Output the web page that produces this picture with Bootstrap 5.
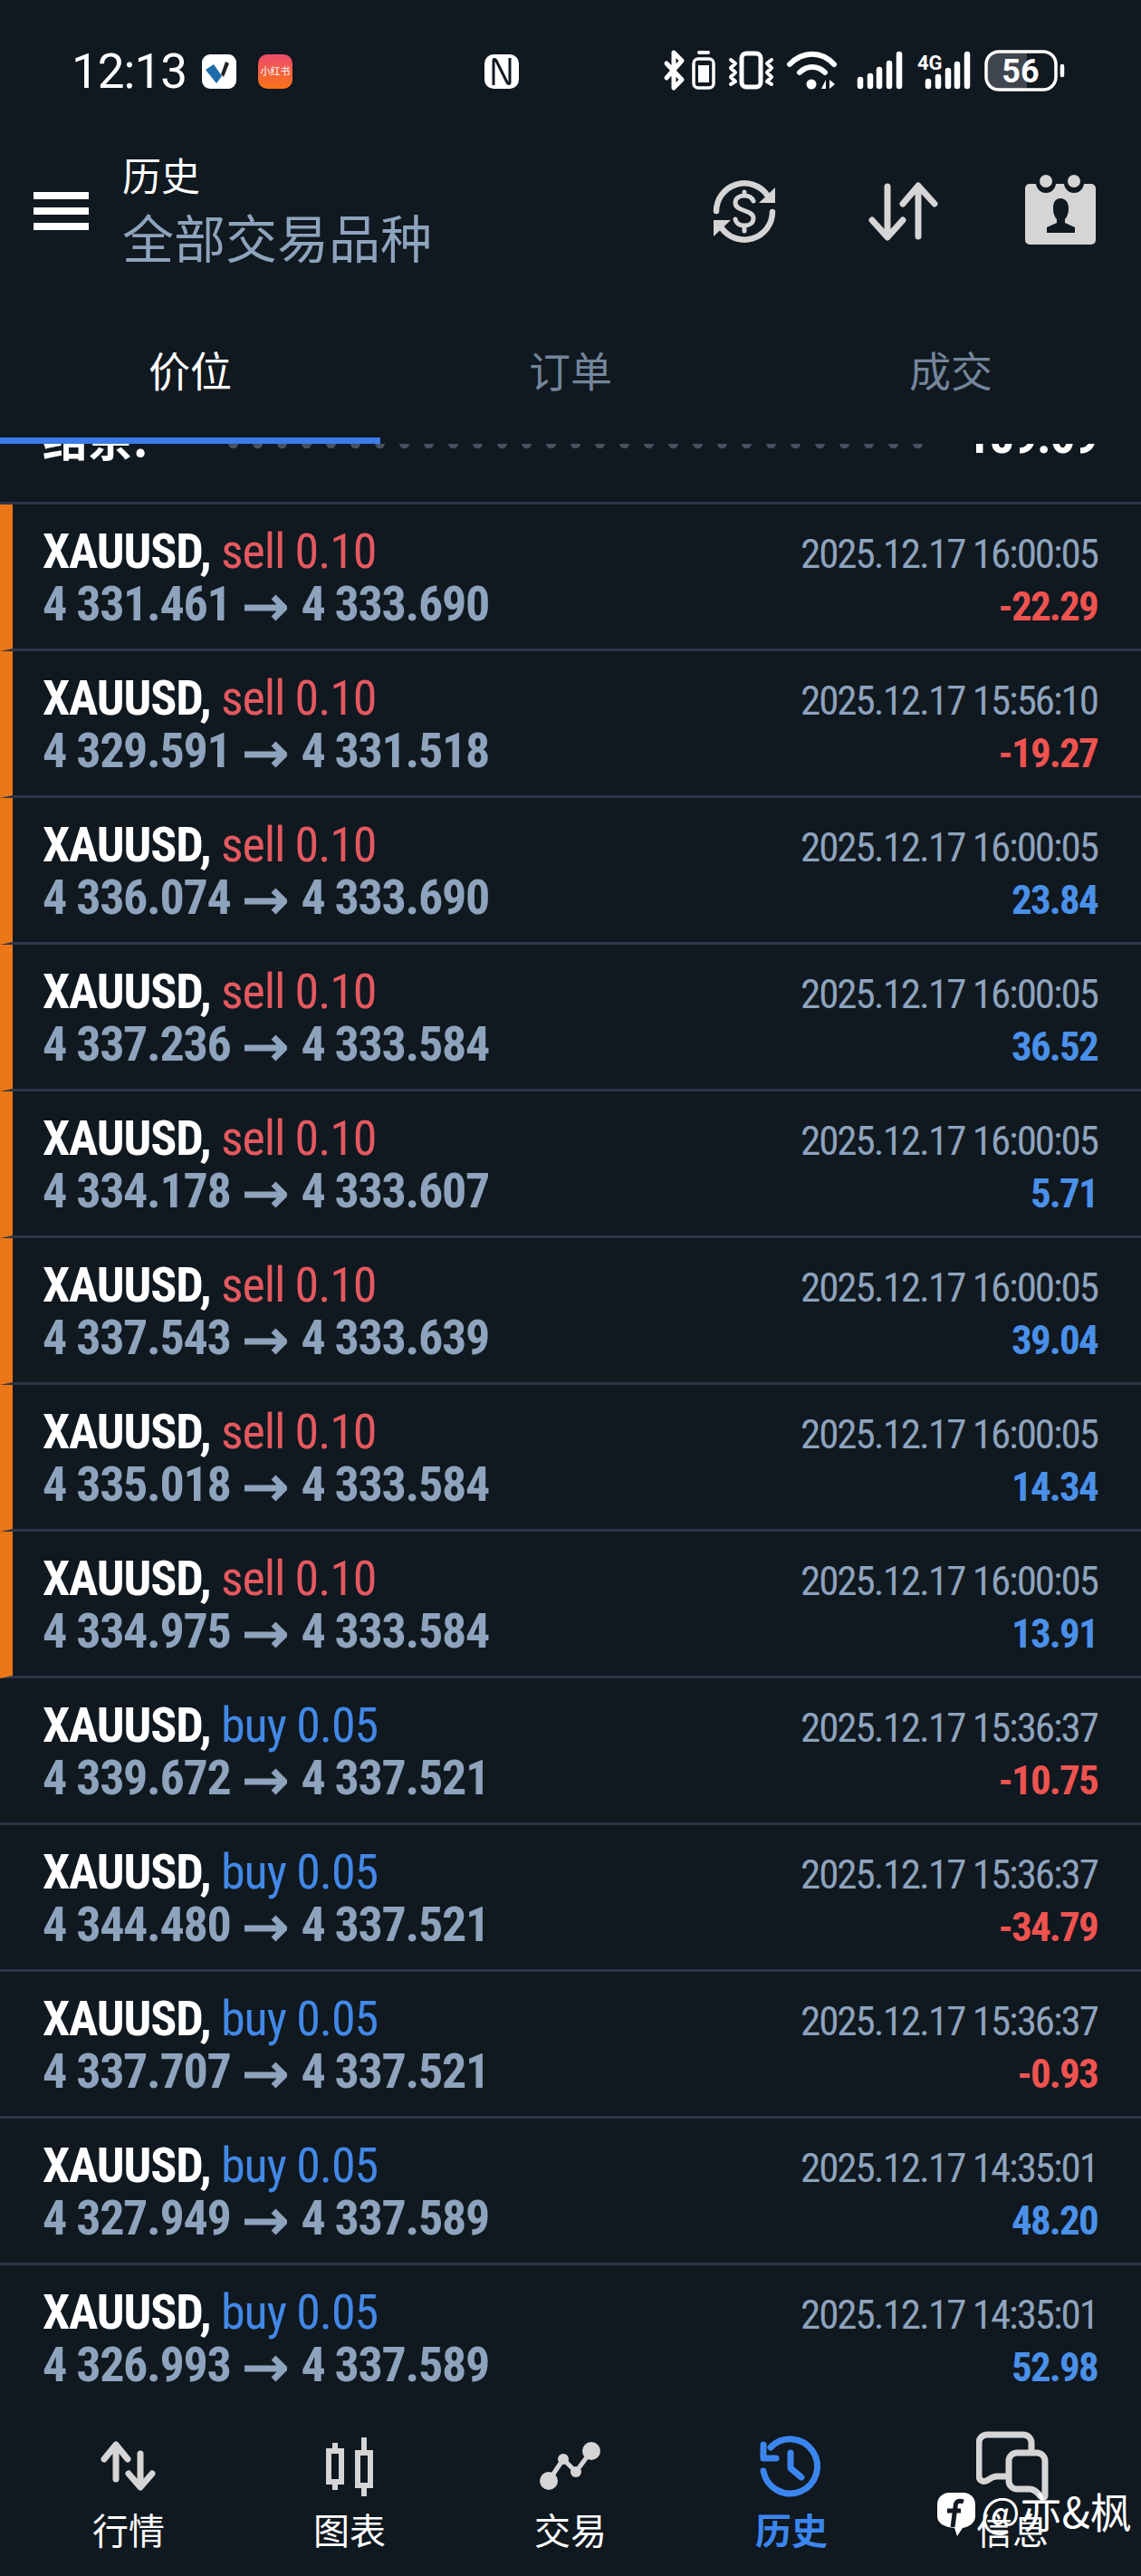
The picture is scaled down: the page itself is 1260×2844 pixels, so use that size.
<!DOCTYPE html>
<html lang="zh">
<head>
<meta charset="utf-8">
<title>历史</title>
<link href="https://cdn.jsdelivr.net/npm/bootstrap@5.3.0/dist/css/bootstrap.min.css" rel="stylesheet">
<style>
html,body{background:#101820;margin:0}
body{width:1260px;height:2844px;overflow:hidden;position:relative;color:#fff;font-family:"Noto Sans CJK SC","Noto Sans",sans-serif}
.status-strip{height:158px;padding:0 83px 0 79px}
.clock{font-family:Roboto,sans-serif;font-size:53px;line-height:1;letter-spacing:-1px;width:144px}
.nfc-mark{margin-left:212px}
.app-bar{height:150px;padding:0 50px 0 37px}
.burger{width:61px;gap:9px;margin-right:37px;flex:none}
.burger i{display:block;height:8px;background:#fff}
.title-stack{padding-bottom:10px}
.title-top{font-size:43px;line-height:64px}
.title-sub{font-size:57px;line-height:72px;color:#8ea3bc}
.tab-row{height:182px}
.tab-cell{font-size:46px;line-height:66px;padding-top:66px;color:#74859a}
.tab-cell.on{color:#fff;border-bottom:7px solid #3b7bea;height:182px}
.sum-strip{height:67px;overflow:hidden;border-bottom:3px solid #2e3547;padding:0 48px 0 47px}
.sum-line{margin-top:-37px;height:58px;line-height:58px;font-weight:700;font-size:54px;white-space:nowrap}
.sum-cn{flex:none;width:110px;font-size:50px}
.sum-dots{flex:none;height:10px;width:783px;margin:32px 0 0 87px;background:radial-gradient(circle,#484f5e 5px,transparent 5.6px) 0 0/27px 10px repeat-x}
.num,.sum-val,.stamp,.pl{font-family:Roboto,"Liberation Sans",sans-serif;font-stretch:75%}
.sum-val{margin-left:auto;letter-spacing:-1.1px}
.trade-list>.trade-row{background:#101820;color:#fff;border-style:solid;border-color:#2e3547;border-width:0 0 3px;height:162px;padding:23px 48px 0 47px}
.trade-list>.trade-row:last-child{border-bottom-width:0;height:159px}
.trade-list>.trade-row.is-sell{border-left:14px solid #ec7718;padding-left:33px}
.deal-line{height:58px;line-height:58px}
.num{font-size:54px;font-weight:700;white-space:nowrap;letter-spacing:-1.1px}
.num svg{width:47px;height:30px;margin:0 15px 0 16px;vertical-align:-1px}
.side{font-weight:400}
.num.price{color:#8ea3bc;letter-spacing:-1.3px}
.c-sell{color:#e4595f}
.c-buy{color:#4288e6}
.stamp{font-size:45px;color:#8ea3bc;font-weight:400;letter-spacing:-2px}
.pl{font-size:45px;font-weight:700;letter-spacing:-1.8px}
.pl.up{color:#4a90e8}
.pl.down{color:#ef5350}
.foot-nav{height:184px;padding:22px 20px 0}
.foot-item{width:244px;font-size:40px;line-height:46px}
.foot-item svg{width:80px;height:80px;display:block;margin-bottom:7px}
.foot-item.on{color:#3b86ee;font-weight:700}
.ink{fill:none;stroke:#d5d5d5;stroke-linecap:round;stroke-linejoin:round}
.solid{fill:#d5d5d5}
.wm{position:absolute;left:1035px;top:2743px;font-size:46px;line-height:56px;gap:6px;color:#fff}
.wm svg{width:42px;height:48px;margin-top:9px}
</style>
</head>
<body>
<div class="status-strip d-flex align-items-center">
  <span class="clock">12:13</span>
  <svg width="38" height="38" viewBox="0 0 38 38" class="me-4"><rect width="38" height="38" rx="9" fill="#fff"/><path d="M4 17l9-6 9 13-6 8z" fill="#1c6ca8"/><path d="M26 8l4 2-6 15-3-3z" fill="#222"/></svg>
  <svg width="38" height="38" viewBox="0 0 38 38"><defs><linearGradient id="xhs" x1="0" y1="0" x2="0" y2="1"><stop offset="0" stop-color="#ef4c6e"/><stop offset="1" stop-color="#f97316"/></linearGradient></defs><rect width="38" height="38" rx="10" fill="url(#xhs)"/><text x="19" y="23" text-anchor="middle" font-size="11" fill="#fff" font-family="Noto Sans CJK SC">小红书</text></svg>
  <svg class="nfc-mark" width="38" height="38" viewBox="0 0 38 38"><rect width="38" height="38" rx="10" fill="#fff"/><path d="M10 34V7c0-2 2-2 3 0l12 24c1 2 3 2 3 0V4" fill="none" stroke="#101820" stroke-width="3"/></svg>
  <svg class="ms-auto" width="445" height="58" viewBox="733 50 445 58" fill="none" stroke="#fff" stroke-linecap="round" stroke-linejoin="round">
    <path d="M737 70l17 18-9 9V58l9 9-17 19" stroke-width="5"/>
    <rect x="767" y="65" width="22" height="32" rx="5" stroke-width="3.5"/><path d="M773 58h10" stroke-width="4"/><rect x="772" y="72" width="12" height="19" fill="#fff" stroke="none"/>
    <rect x="820" y="59" width="21" height="37" rx="5" stroke-width="5"/>
    <path d="M808 66l5 4-5 5 5 5-5 5 5 5-5 3M853 66l-5 4 5 5-5 5 5 5-5 5 5 3" stroke-width="4"/>
    <path d="M873 71c15-15 35-15 49 0M884 80c8-8 20-8 28 0" stroke-width="6"/><circle cx="897" cy="93" r="5.5" fill="#fff" stroke="none"/>
    <path d="M913 88l-5 10h5zM917 88l6 5-6 5z" fill="#fff" stroke="none"/>
    <path d="M951 88v7M962 84v11M972 77v18M983 70v25M994 60v35" stroke-width="6.5"/>
    <path d="M1026 90v5M1037 85v10M1048 78v17M1058 71v24M1069 60v35" stroke-width="6.5"/>
    <text x="1014" y="77" font-family="Roboto" font-weight="700" font-size="22" fill="#fff" stroke="none">4G</text>
    <path d="M1091 71a13 13 0 0 1 13-13h31v40h-31a13 13 0 0 1-13-13z" fill="#40464f" stroke="none"/>
    <rect x="1090" y="57" width="77" height="42" rx="14" stroke-width="3.5"/>
    <text x="1128" y="91" text-anchor="middle" font-family="Roboto" font-weight="700" font-size="36" fill="#fff" stroke="none">56</text>
    <path d="M1174 73v10" stroke-width="4.5"/>
  </svg>
</div>

<div class="app-bar d-flex align-items-center">
  <div class="burger d-flex flex-column"><i></i><i></i><i></i></div>
  <div class="flex-grow-1 title-stack">
    <div class="title-top">历史</div>
    <div class="title-sub">全部交易品种</div>
  </div>
  <svg width="430" height="90" viewBox="780 188 430 90">
    <path class="ink" stroke-width="6.5" d="M791 233a31 31 0 0 1 56-18M853 234a31 31 0 0 1-56 18" stroke-linecap="butt"/>
    <path class="solid" d="M856 207v17h-18zM788 243v18l19-18z"/>
    <path class="ink" stroke-width="5" d="M832 222c-2-5-6-6-10-6-6 0-10 3-10 8 0 10 20 7 20 17 0 5-4 8-10 8-5 0-9-2-10-7M822 212v4M822 250v5"/>
    <path class="ink" stroke-width="7" d="M980 206v55M963 243l17 19 17-19M1014 206v55M997 225l17-20 18 20"/>
    <rect class="solid" x="1132" y="203" width="78" height="67" rx="5"/>
    <circle cx="1155" cy="202" r="11" fill="#101820"/><circle cx="1186" cy="202" r="11" fill="#101820"/>
    <circle class="solid" cx="1155" cy="200" r="7"/><circle class="solid" cx="1186" cy="200" r="7"/>
    <path fill="#101820" d="M1171 219c6 0 9 5 9 11 0 6-2 10-4 12v4l11 5v6h-31v-6l11-5v-4c-2-2-4-6-4-12 0-6 2-11 8-11z"/>
  </svg>
</div>

<div class="tab-row row g-0 text-center">
  <div class="col-4 tab-cell on">价位</div>
  <div class="col-4 tab-cell">订单</div>
  <div class="col-4 tab-cell">成交</div>
</div>

<div class="sum-strip">
  <div class="sum-line d-flex">
    <span class="sum-cn">结余:</span>
    <span class="sum-dots"></span>
    <span class="sum-val">189.69</span>
  </div>
</div>

<div class="list-group list-group-flush trade-list">
  <div class="list-group-item trade-row is-sell"><div class="deal-line d-flex justify-content-between align-items-baseline"><span class="num">XAUUSD, <span class="side c-sell">sell 0.10</span></span><span class="stamp">2025.12.17 16:00:05</span></div><div class="deal-line d-flex justify-content-between align-items-baseline"><span class="num price">4 331.461<svg viewBox="0 0 47 30"><path d="M0 15h44M32 3l12 12-12 12" fill="none" stroke="#8ea3bc" stroke-width="7"/></svg>4 333.690</span><span class="pl down">-22.29</span></div></div>
  <div class="list-group-item trade-row is-sell"><div class="deal-line d-flex justify-content-between align-items-baseline"><span class="num">XAUUSD, <span class="side c-sell">sell 0.10</span></span><span class="stamp">2025.12.17 15:56:10</span></div><div class="deal-line d-flex justify-content-between align-items-baseline"><span class="num price">4 329.591<svg viewBox="0 0 47 30"><path d="M0 15h44M32 3l12 12-12 12" fill="none" stroke="#8ea3bc" stroke-width="7"/></svg>4 331.518</span><span class="pl down">-19.27</span></div></div>
  <div class="list-group-item trade-row is-sell"><div class="deal-line d-flex justify-content-between align-items-baseline"><span class="num">XAUUSD, <span class="side c-sell">sell 0.10</span></span><span class="stamp">2025.12.17 16:00:05</span></div><div class="deal-line d-flex justify-content-between align-items-baseline"><span class="num price">4 336.074<svg viewBox="0 0 47 30"><path d="M0 15h44M32 3l12 12-12 12" fill="none" stroke="#8ea3bc" stroke-width="7"/></svg>4 333.690</span><span class="pl up">23.84</span></div></div>
  <div class="list-group-item trade-row is-sell"><div class="deal-line d-flex justify-content-between align-items-baseline"><span class="num">XAUUSD, <span class="side c-sell">sell 0.10</span></span><span class="stamp">2025.12.17 16:00:05</span></div><div class="deal-line d-flex justify-content-between align-items-baseline"><span class="num price">4 337.236<svg viewBox="0 0 47 30"><path d="M0 15h44M32 3l12 12-12 12" fill="none" stroke="#8ea3bc" stroke-width="7"/></svg>4 333.584</span><span class="pl up">36.52</span></div></div>
  <div class="list-group-item trade-row is-sell"><div class="deal-line d-flex justify-content-between align-items-baseline"><span class="num">XAUUSD, <span class="side c-sell">sell 0.10</span></span><span class="stamp">2025.12.17 16:00:05</span></div><div class="deal-line d-flex justify-content-between align-items-baseline"><span class="num price">4 334.178<svg viewBox="0 0 47 30"><path d="M0 15h44M32 3l12 12-12 12" fill="none" stroke="#8ea3bc" stroke-width="7"/></svg>4 333.607</span><span class="pl up">5.71</span></div></div>
  <div class="list-group-item trade-row is-sell"><div class="deal-line d-flex justify-content-between align-items-baseline"><span class="num">XAUUSD, <span class="side c-sell">sell 0.10</span></span><span class="stamp">2025.12.17 16:00:05</span></div><div class="deal-line d-flex justify-content-between align-items-baseline"><span class="num price">4 337.543<svg viewBox="0 0 47 30"><path d="M0 15h44M32 3l12 12-12 12" fill="none" stroke="#8ea3bc" stroke-width="7"/></svg>4 333.639</span><span class="pl up">39.04</span></div></div>
  <div class="list-group-item trade-row is-sell"><div class="deal-line d-flex justify-content-between align-items-baseline"><span class="num">XAUUSD, <span class="side c-sell">sell 0.10</span></span><span class="stamp">2025.12.17 16:00:05</span></div><div class="deal-line d-flex justify-content-between align-items-baseline"><span class="num price">4 335.018<svg viewBox="0 0 47 30"><path d="M0 15h44M32 3l12 12-12 12" fill="none" stroke="#8ea3bc" stroke-width="7"/></svg>4 333.584</span><span class="pl up">14.34</span></div></div>
  <div class="list-group-item trade-row is-sell"><div class="deal-line d-flex justify-content-between align-items-baseline"><span class="num">XAUUSD, <span class="side c-sell">sell 0.10</span></span><span class="stamp">2025.12.17 16:00:05</span></div><div class="deal-line d-flex justify-content-between align-items-baseline"><span class="num price">4 334.975<svg viewBox="0 0 47 30"><path d="M0 15h44M32 3l12 12-12 12" fill="none" stroke="#8ea3bc" stroke-width="7"/></svg>4 333.584</span><span class="pl up">13.91</span></div></div>
  <div class="list-group-item trade-row"><div class="deal-line d-flex justify-content-between align-items-baseline"><span class="num">XAUUSD, <span class="side c-buy">buy 0.05</span></span><span class="stamp">2025.12.17 15:36:37</span></div><div class="deal-line d-flex justify-content-between align-items-baseline"><span class="num price">4 339.672<svg viewBox="0 0 47 30"><path d="M0 15h44M32 3l12 12-12 12" fill="none" stroke="#8ea3bc" stroke-width="7"/></svg>4 337.521</span><span class="pl down">-10.75</span></div></div>
  <div class="list-group-item trade-row"><div class="deal-line d-flex justify-content-between align-items-baseline"><span class="num">XAUUSD, <span class="side c-buy">buy 0.05</span></span><span class="stamp">2025.12.17 15:36:37</span></div><div class="deal-line d-flex justify-content-between align-items-baseline"><span class="num price">4 344.480<svg viewBox="0 0 47 30"><path d="M0 15h44M32 3l12 12-12 12" fill="none" stroke="#8ea3bc" stroke-width="7"/></svg>4 337.521</span><span class="pl down">-34.79</span></div></div>
  <div class="list-group-item trade-row"><div class="deal-line d-flex justify-content-between align-items-baseline"><span class="num">XAUUSD, <span class="side c-buy">buy 0.05</span></span><span class="stamp">2025.12.17 15:36:37</span></div><div class="deal-line d-flex justify-content-between align-items-baseline"><span class="num price">4 337.707<svg viewBox="0 0 47 30"><path d="M0 15h44M32 3l12 12-12 12" fill="none" stroke="#8ea3bc" stroke-width="7"/></svg>4 337.521</span><span class="pl down">-0.93</span></div></div>
  <div class="list-group-item trade-row"><div class="deal-line d-flex justify-content-between align-items-baseline"><span class="num">XAUUSD, <span class="side c-buy">buy 0.05</span></span><span class="stamp">2025.12.17 14:35:01</span></div><div class="deal-line d-flex justify-content-between align-items-baseline"><span class="num price">4 327.949<svg viewBox="0 0 47 30"><path d="M0 15h44M32 3l12 12-12 12" fill="none" stroke="#8ea3bc" stroke-width="7"/></svg>4 337.589</span><span class="pl up">48.20</span></div></div>
  <div class="list-group-item trade-row"><div class="deal-line d-flex justify-content-between align-items-baseline"><span class="num">XAUUSD, <span class="side c-buy">buy 0.05</span></span><span class="stamp">2025.12.17 14:35:01</span></div><div class="deal-line d-flex justify-content-between align-items-baseline"><span class="num price">4 326.993<svg viewBox="0 0 47 30"><path d="M0 15h44M32 3l12 12-12 12" fill="none" stroke="#8ea3bc" stroke-width="7"/></svg>4 337.589</span><span class="pl up">52.98</span></div></div>
</div>

<nav class="foot-nav d-flex">
  <div class="foot-item d-flex flex-column align-items-center">
    <svg viewBox="102 2682 80 80"><path class="ink" stroke-width="7" d="M128 2702v35M115 2715l13-16 13 16M155 2709v34M142 2731l13 15 13-15"/></svg>
    行情
  </div>
  <div class="foot-item d-flex flex-column align-items-center">
    <svg viewBox="346 2682 80 80"><path class="solid" fill-rule="evenodd" d="M367 2697h6v6h7v40h-7v6h-6v-6h-7v-40h7zM366 2709v28h8v-28zM399 2691h6v14h7v42h-7v9h-6v-9h-7v-42h7zM398 2711v30h8v-30z"/></svg>
    图表
  </div>
  <div class="foot-item d-flex flex-column align-items-center">
    <svg viewBox="590 2682 80 80"><path class="ink" stroke-width="5" d="M606 2739l16-24 14 14 17-23"/><circle class="solid" cx="606" cy="2739" r="10"/><circle class="solid" cx="622" cy="2715" r="6"/><circle class="solid" cx="636" cy="2729" r="6"/><circle class="solid" cx="653" cy="2706" r="10"/></svg>
    交易
  </div>
  <div class="foot-item on d-flex flex-column align-items-center">
    <svg viewBox="834 2682 80 80"><g fill="none" stroke="#3b86ee" stroke-width="7" stroke-linecap="round" stroke-linejoin="round"><path d="M843 2728a30 30 0 1 0 8-26"/><path d="M873 2708v17l12 10"/><path d="M843 2699v15h14"/></g></svg>
    历史
  </div>
  <div class="foot-item d-flex flex-column align-items-center">
    <svg viewBox="1078 2682 80 80"><path class="ink" stroke-width="7" d="M1139 2704v-7a9 9 0 0 0-9-9h-40a9 9 0 0 0-9 9v36c0 6 5 8 10 5 4-3 6-4 10-4h12"/><path class="ink" stroke-width="7" d="M1123 2708h22a9 9 0 0 1 9 9v38c0 3-3 3-5 1-3-4-7-8-12-8h-14a9 9 0 0 1-9-9v-22a9 9 0 0 1 9-9z"/></svg>
    信息
  </div>
</nav>

<div class="wm d-flex">
  <svg viewBox="0 0 42 48"><path fill="#fff" d="M13 0h16a13 13 0 0 1 13 13v13c0 8-8 12-14 13l-6 9-3-9C8 38 0 34 0 26V13A13 13 0 0 1 13 0z"/><path d="M29 10c-6-2-9 0-9 6l-3 22M11 20h15" fill="none" stroke="#101820" stroke-width="5"/></svg>
  <span>@亦&amp;枫</span>
</div>
<script src="https://cdn.jsdelivr.net/npm/bootstrap@5.3.0/dist/js/bootstrap.bundle.min.js"></script>
</body>
</html>
